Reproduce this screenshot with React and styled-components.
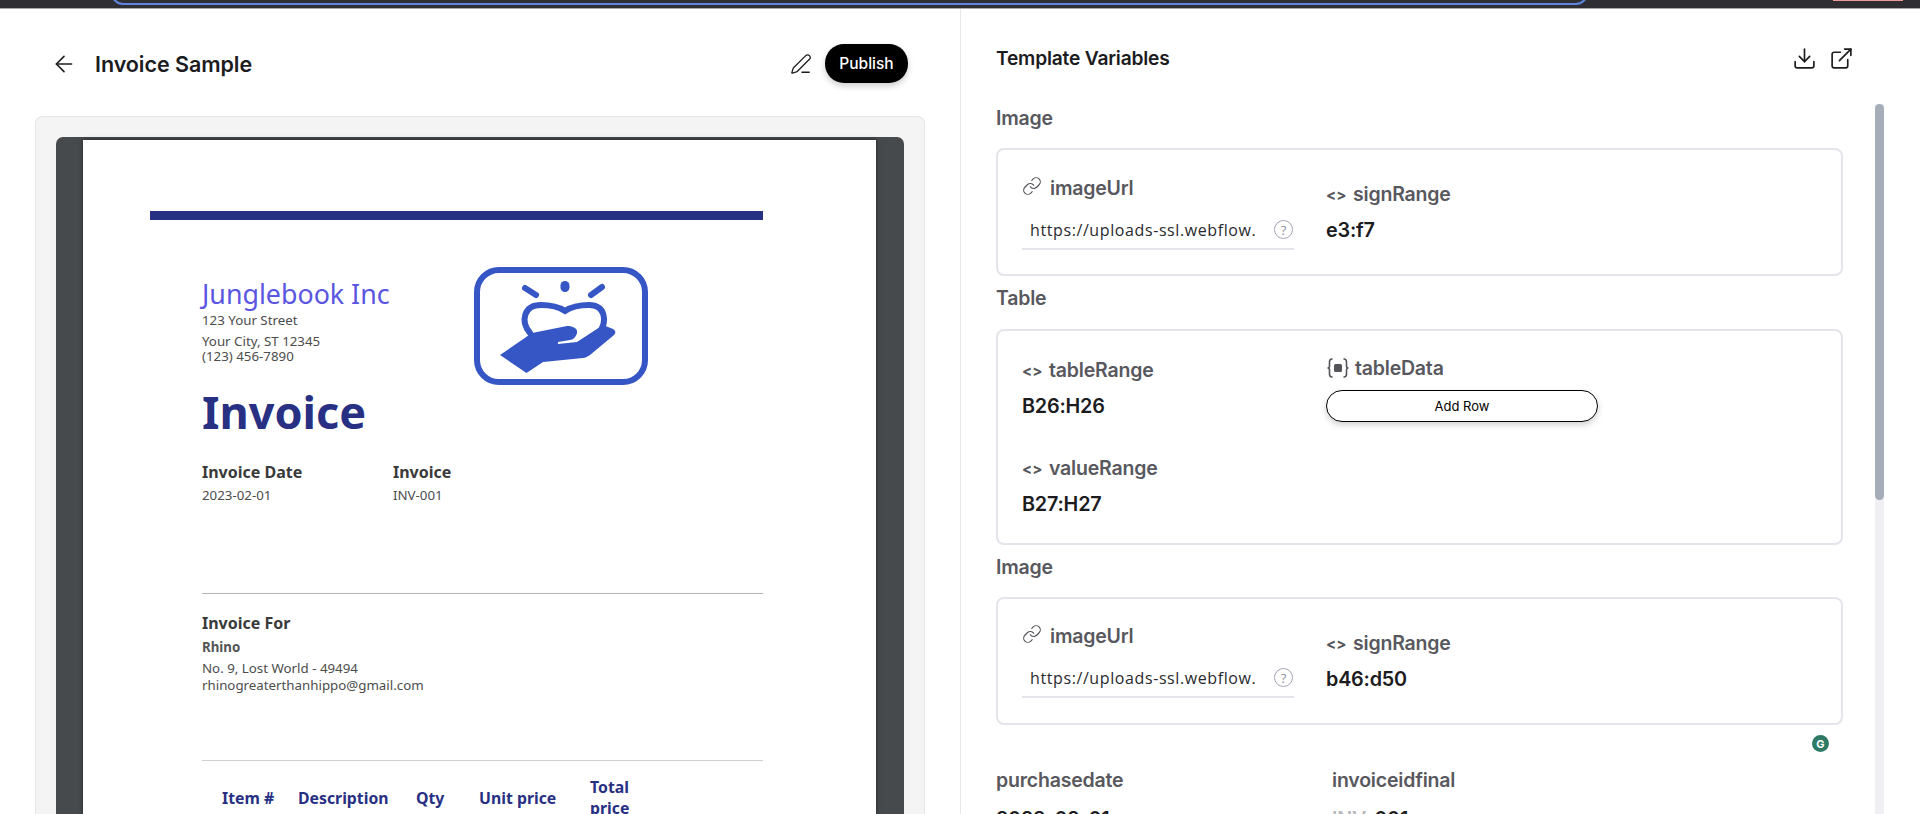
import React from 'react';
import styled, { createGlobalStyle } from 'styled-components';
import { ArrowLeft, Download, ExternalLink, Link, PenLine } from 'lucide-react';

const GlobalStyle = createGlobalStyle`
    html, body {
        margin: 0;
        padding: 0;
        background: #fff;
    }
    * {
        box-sizing: border-box;
    }
`;

const Screen = styled.div`
    width: 1920px;
    height: 814px;
    overflow: hidden;
    display: flex;
    flex-direction: column;
    font-family: Inter, "Liberation Sans", sans-serif;
    color: #1c1c1f;
`;

const TopBar = styled.div`
    position: relative;
    z-index: 1;
    height: 8px;
    flex: none;
    background: #2f2e33;
    box-shadow: 0 1px 0 #a9a9ac;
    overflow: hidden;
    display: flex;
    align-items: flex-end;
    padding-left: 111px;
`;

const AddressField = styled.div`
    width: 1477px;
    height: 30px;
    flex: none;
    border: 2px solid #5f86de;
    border-radius: 0 0 12px 12px;
    margin-bottom: 3px;
`;

const Recording = styled.div`
    width: 70px;
    height: 1px;
    flex: none;
    align-self: flex-start;
    margin-left: 245px;
    background: #ee9c93;
`;

const Main = styled.div`
    flex: 1;
    min-height: 0;
    display: grid;
    grid-template-columns: 960px 1fr;
`;

const LeftPane = styled.section`
    display: flex;
    flex-direction: column;
    min-height: 0;
    overflow: hidden;
    padding: 36px 35px 0;
`;

const PreviewHeader = styled.header`
    height: 39px;
    flex: none;
    display: flex;
    align-items: center;
    padding: 0 17px 0 16px;
`;

const BackIcon = styled(ArrowLeft)`
    width: 26px;
    height: 26px;
    stroke-width: 1.5;
    color: #1c1c1f;
    margin-right: 18px;
`;

const PreviewTitle = styled.h1`
    margin: 0;
    flex: 1;
    font-family: Inter, sans-serif;
    font-size: 21.5px;
    font-weight: 600;
    letter-spacing: -0.05px;
`;

const EditIcon = styled(PenLine)`
    width: 22px;
    height: 22px;
    stroke-width: 1.4;
    margin-right: 13px;
`;

const PublishButton = styled.button`
    width: 83px;
    height: 39px;
    border: 0;
    border-radius: 19px;
    background: #000;
    color: #fff;
    font-family: Inter, sans-serif;
    font-size: 15.5px;
    font-weight: 500;
    box-shadow: 0 3px 6px rgba(0, 0, 0, 0.2);
`;

const PreviewCard = styled.div`
    flex: 1;
    margin-top: 33px;
    padding: 20px 20px 0;
    background: #f4f4f4;
    border: 1px solid #e6e6ec;
    border-bottom: 0;
    border-radius: 8px 8px 0 0;
    display: flex;
    min-height: 0;
`;

const PdfViewer = styled.div`
    flex: 1;
    background: #474a4c;
    border-radius: 7px 7px 0 0;
    padding: 3px 28px 0 27px;
    display: flex;
`;

const Sheet = styled.article`
    flex: 1;
    background: #fff;
    box-shadow: 0 0 4px rgba(0, 0, 0, 0.55);
    padding: 71px 113px 0 67px;
    font-family: "Noto Sans", sans-serif;
    color: #4d4d4d;
    overflow: hidden;
`;

const AccentRule = styled.div`
    height: 9px;
    background: #283084;
`;

const Indented = styled.div`
    padding-left: 52px;
`;

const CompanyRow = styled(Indented)`
    display: flex;
    justify-content: space-between;
    padding-right: 115px;
    padding-top: 47px;
`;

const Company = styled.div`
    padding-top: 12px;
`;

const CompanyName = styled.div`
    font-size: 26.8px;
    line-height: 30px;
    color: #5b56e2;
`;

const AddressLine = styled.div`
    font-size: 13.3px;
    line-height: ${(p) => p.$height || 15}px;
    margin-top: ${(p) => p.$gap || 0}px;
`;

const Logo = styled.svg`
    width: 174px;
    height: 118px;
    flex: none;
`;

const InvoiceTitle = styled.div`
    margin-top: 2px;
    font-size: 45px;
    line-height: 50px;
    font-weight: 700;
    color: #283084;
`;

const MetaRow = styled.div`
    margin-top: 25px;
    display: flex;
`;

const MetaColumn = styled.div`
    width: 191px;
`;

const MetaLabel = styled.div`
    font-size: 16px;
    line-height: 20px;
    font-weight: 700;
    color: #3a3a3a;
`;

const MetaValue = styled.div`
    margin-top: 4px;
    font-size: 13.3px;
    line-height: 18px;
`;

const Divider = styled.hr`
    margin: ${(p) => p.$top}px 0 0 52px;
    border: 0;
    border-top: 1px solid ${(p) => p.$color};
`;

const BillTo = styled(Indented)`
    margin-top: 19px;
`;

const Customer = styled.div`
    margin-top: 5px;
    font-size: 13.3px;
    line-height: 18px;
    font-weight: 700;
    color: #555;
`;

const TableHead = styled.div`
    margin: 16px 0 0 72px;
    display: flex;
    align-items: center;
    font-size: 15.8px;
    line-height: 21px;
    font-weight: 700;
    color: #283084;
`;

const HeadCell = styled.div`
    width: ${(p) => p.$width}px;
    flex: none;
`;

const RightPane = styled.section`
    position: relative;
    border-left: 1px solid #e7e7ea;
    min-height: 0;
    overflow: hidden;
    padding: 28px 0 0 35px;
`;

const PanelHeader = styled.header`
    height: 44px;
    display: flex;
    align-items: center;
    padding-right: 66px;
`;

const PanelTitle = styled.h2`
    margin: 0;
    flex: 1;
    font-size: 19.2px;
    font-weight: 600;
    letter-spacing: -0.2px;
`;

const PanelAction = styled.span`
    margin-left: 12px;
    display: flex;
    svg {
        width: 25px;
        height: 25px;
        stroke-width: 1.6;
    }
`;

const VariableList = styled.div`
    width: 847px;
    padding-top: 20px;
`;

const GroupLabel = styled.div`
    height: 36px;
    display: flex;
    align-items: center;
    font-size: 19.5px;
    font-weight: 600;
    letter-spacing: -0.2px;
    color: #58585e;
`;

const VariableCard = styled.div`
    height: ${(p) => p.$height}px;
    border: 2px solid #e4e4ea;
    border-radius: 8px;
    padding: 0 24px;
    display: grid;
    grid-template-columns: 304px 1fr;
    margin-top: ${(p) => p.$gap}px;
    margin-bottom: 4px;
`;

const Field = styled.div`
    padding-top: ${(p) => p.$top}px;
`;

const FieldLabel = styled.div`
    display: flex;
    align-items: center;
    gap: 8px;
    height: 24px;
    font-size: 19.5px;
    font-weight: 600;
    letter-spacing: -0.2px;
    color: #58585e;
    svg {
        flex: none;
        color: #54545a;
    }
`;

const LinkIcon = styled(Link)`
    width: 20px;
    height: 20px;
    stroke-width: 1.4;
    transform: translateY(-2px);
`;

const TableDataIcon = styled.svg`
    width: 24px;
    height: 24px;
    margin-right: -3px;
`;

const CodeGlyph = styled.span`
    font-size: 15px;
    font-weight: 700;
    width: 18px;
    margin-right: 1px;
    color: #54545a;
    letter-spacing: 0;
`;

const RangeValue = styled.div`
    margin-top: 12px;
    font-size: 19.8px;
    line-height: 24px;
    font-weight: 600;
    letter-spacing: -0.2px;
    color: #1c1c1f;
`;

const UrlField = styled.div`
    width: 272px;
    height: 39px;
    margin-top: 11px;
    padding: 0 1px 0 8px;
    display: flex;
    align-items: center;
    justify-content: space-between;
    border-bottom: 2px solid #e4e4ea;
    font-family: "Open Sans", sans-serif;
    font-size: 16px;
    letter-spacing: 0.6px;
    color: #2a2a2e;
`;

const HelpDot = styled.span`
    width: 19px;
    height: 19px;
    border: 1.5px solid #a2a5b5;
    border-radius: 50%;
    display: flex;
    align-items: center;
    justify-content: center;
    font-size: 13px;
    color: #8d90a2;
    letter-spacing: 0;
    flex: none;
`;

const AddRowButton = styled.button`
    display: block;
    width: 272px;
    height: 32px;
    margin-top: 10px;
    border: 1px solid #000;
    border-radius: 16px;
    background: #fff;
    color: #000;
    font-family: Inter, sans-serif;
    font-size: 13px;
    box-shadow: 0 3px 6px rgba(0, 0, 0, 0.18);
`;

const PlainFields = styled.div`
    margin-top: 43px;
    display: grid;
    grid-template-columns: 336px 1fr;
`;

const PlainLabel = styled(GroupLabel)`
    height: 24px;
`;

const PlainValue = styled(RangeValue)`
    margin-top: 15px;
`;

const IdPrefix = styled.span`
    color: #b9b9be;
`;

const ScrollTrack = styled.div`
    position: absolute;
    left: 914px;
    top: 96px;
    bottom: 0;
    width: 9px;
    background: #f0f0f4;
`;

const ScrollThumb = styled.div`
    position: absolute;
    left: 914px;
    top: 96px;
    width: 9px;
    height: 396px;
    border-radius: 5px;
    background: #a5adb8;
`;

const GrammarlyBadge = styled.div`
    position: absolute;
    left: 851px;
    top: 727px;
    width: 17px;
    height: 17px;
    border-radius: 50%;
    background: #2f7a66;
    color: #fff;
    display: flex;
    align-items: center;
    justify-content: center;
    font-size: 11px;
    font-weight: 700;
`;

const HandLogo = () => (
    <Logo viewBox="0 0 174 118">
        <rect x="3" y="3" width="168" height="112" rx="22" fill="none" stroke="#3556c4" strokeWidth="6" />
        <g fill="none" stroke="#3556c4" strokeLinecap="round">
            <path d="M51 21 L62 28" strokeWidth="6" />
            <path d="M91 18.5 L91 20.5" strokeWidth="9" />
            <path d="M128 20 L117 28" strokeWidth="6" />
            <path d="M56 66 C46 54 50 38 67 38 C76 38 85 40 91 44 C97 40 106 38 115 38 C131 38 134 54 125 66" strokeWidth="6" />
        </g>
        <path
            d="M26 88 L58 66 L93 59 C100 59 104 62 103 66 C102 70 99 73 96 73 L84 75 L84 77 L103 75 L129 58 L139 62 C142 64 142 66 140 68 L116 88 C113 90 111 91 109 91 L69 95 L54 105 C53 106 52 106 51 105 Z"
            fill="#3556c4"
        />
    </Logo>
);

const TableGlyph = () => (
    <TableDataIcon viewBox="0 0 24 24" fill="none" stroke="currentColor" strokeWidth="1.6" strokeLinecap="round">
        <path d="M6 3 C4 3 3.5 4 3.5 6 V10 C3.5 11 3 12 1.5 12 C3 12 3.5 13 3.5 14 V18 C3.5 20 4 21 6 21" />
        <path d="M18 3 C20 3 20.5 4 20.5 6 V10 C20.5 11 21 12 22.5 12 C21 12 20.5 13 20.5 14 V18 C20.5 20 20 21 18 21" />
        <rect x="8" y="8" width="8" height="8" rx="1.5" fill="currentColor" stroke="none" />
    </TableDataIcon>
);

const CodeMark = () => <CodeGlyph>&lt;&gt;</CodeGlyph>;

const ImageFields = ({ sign, top }) => (
    <>
        <Field $top={top}>
            <FieldLabel>
                <LinkIcon />
                imageUrl
            </FieldLabel>
            <UrlField>
                https://uploads-ssl.webflow.
                <HelpDot>?</HelpDot>
            </UrlField>
        </Field>
        <Field $top={32}>
            <FieldLabel>
                <CodeMark />
                signRange
            </FieldLabel>
            <RangeValue>{sign}</RangeValue>
        </Field>
    </>
);

const App = () => (
    <Screen>
        <GlobalStyle />
        <TopBar>
            <AddressField />
            <Recording />
        </TopBar>
        <Main>
            <LeftPane>
                <PreviewHeader>
                    <BackIcon />
                    <PreviewTitle>Invoice Sample</PreviewTitle>
                    <EditIcon />
                    <PublishButton>Publish</PublishButton>
                </PreviewHeader>
                <PreviewCard>
                    <PdfViewer>
                        <Sheet>
                            <AccentRule />
                            <CompanyRow>
                                <Company>
                                    <CompanyName>Junglebook Inc</CompanyName>
                                    <AddressLine $height={22}>123 Your Street</AddressLine>
                                    <AddressLine $gap={3}>Your City, ST 12345</AddressLine>
                                    <AddressLine>(123) 456-7890</AddressLine>
                                </Company>
                                <HandLogo />
                            </CompanyRow>
                            <Indented>
                                <InvoiceTitle>Invoice</InvoiceTitle>
                                <MetaRow>
                                    <MetaColumn>
                                        <MetaLabel>Invoice Date</MetaLabel>
                                        <MetaValue>2023-02-01</MetaValue>
                                    </MetaColumn>
                                    <MetaColumn>
                                        <MetaLabel>Invoice</MetaLabel>
                                        <MetaValue>INV-001</MetaValue>
                                    </MetaColumn>
                                </MetaRow>
                            </Indented>
                            <Divider $top={89} $color="#b4b4b4" />
                            <BillTo>
                                <MetaLabel>Invoice For</MetaLabel>
                                <Customer>Rhino</Customer>
                                <AddressLine $gap={5}>No. 9, Lost World - 49494</AddressLine>
                                <AddressLine $gap={2}>rhinogreaterthanhippo@gmail.com</AddressLine>
                            </BillTo>
                            <Divider $top={67} $color="#cfcfcf" />
                            <TableHead>
                                <HeadCell $width={76}>Item #</HeadCell>
                                <HeadCell $width={118}>Description</HeadCell>
                                <HeadCell $width={63}>Qty</HeadCell>
                                <HeadCell $width={111}>Unit price</HeadCell>
                                <HeadCell $width={50}>Total price</HeadCell>
                            </TableHead>
                        </Sheet>
                    </PdfViewer>
                </PreviewCard>
            </LeftPane>
            <RightPane>
                <PanelHeader>
                    <PanelTitle>Template Variables</PanelTitle>
                    <PanelAction><Download /></PanelAction>
                    <PanelAction><ExternalLink /></PanelAction>
                </PanelHeader>
                <VariableList>
                    <GroupLabel>Image</GroupLabel>
                    <VariableCard $height={128} $gap={12}>
                        <ImageFields sign="e3:f7" top={26} />
                    </VariableCard>
                    <GroupLabel>Table</GroupLabel>
                    <VariableCard $height={216} $gap={13}>
                        <Field $top={27}>
                            <FieldLabel>
                                <CodeMark />
                                tableRange
                            </FieldLabel>
                            <RangeValue>B26:H26</RangeValue>
                            <Field $top={38}>
                                <FieldLabel>
                                    <CodeMark />
                                    valueRange
                                </FieldLabel>
                                <RangeValue>B27:H27</RangeValue>
                            </Field>
                        </Field>
                        <Field $top={25}>
                            <FieldLabel>
                                <TableGlyph />
                                tableData
                            </FieldLabel>
                            <AddRowButton>Add Row</AddRowButton>
                        </Field>
                    </VariableCard>
                    <GroupLabel>Image</GroupLabel>
                    <VariableCard $height={128} $gap={12}>
                        <ImageFields sign="b46:d50" top={25} />
                    </VariableCard>
                    <PlainFields>
                        <div>
                            <PlainLabel>purchasedate</PlainLabel>
                            <PlainValue>2023-02-01</PlainValue>
                        </div>
                        <div>
                            <PlainLabel>invoiceidfinal</PlainLabel>
                            <PlainValue><IdPrefix>INV-</IdPrefix>001</PlainValue>
                        </div>
                    </PlainFields>
                </VariableList>
                <ScrollTrack />
                <ScrollThumb />
                <GrammarlyBadge>G</GrammarlyBadge>
            </RightPane>
        </Main>
    </Screen>
);

export default App;
